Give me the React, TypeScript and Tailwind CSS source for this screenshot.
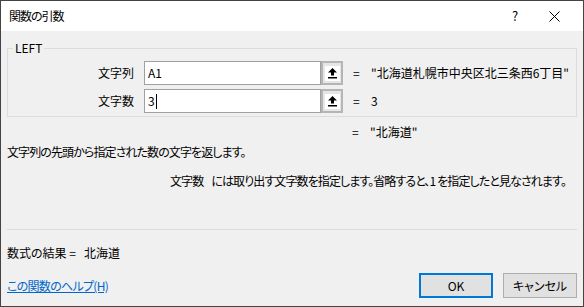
import React from "react";

const UploadIcon = () => (
  <svg width="11" height="12" viewBox="0 0 11 12" className="block">
    <path d="M5.5 1 L10 5.5 H7 V8.5 H4 V5.5 H1 Z" fill="#000" />
    <rect x="1" y="10" width="9" height="1.5" fill="#000" />
  </svg>
);

const ArgRow = ({ label, value, result, caret }: { label: string; value: string; result: string; caret?: boolean }) => (
  <div className="flex items-center h-[24px]">
    <div className="w-[136px] text-right pr-[10px]">{label}</div>
    <div className="flex h-[24px]">
      <div className="w-[177px] h-[24px] bg-white border border-[#a0a0a0] flex items-center pl-[3px]">
        {value}
        {caret && <span className="inline-block w-px h-[15px] bg-black ml-[1px]" />}
      </div>
      <div className="w-[22px] h-[24px] border-2 border-[#b5b5b5] bg-[#e6e6e6] flex items-center justify-center">
        <div className="w-[15px] h-[15px] bg-white flex items-center justify-center">
          <UploadIcon />
        </div>
      </div>
    </div>
    <div className="ml-[10px] w-[18px]">=</div>
    <div className="whitespace-nowrap">{result}</div>
  </div>
);

export default function App() {
  return (
    <div
      className="w-[584px] h-[307px] border border-[#444] bg-[#f0f0f0] text-[12px] leading-[16px] text-black flex flex-col overflow-hidden [font-feature-settings:'palt']"
      style={{ fontFamily: '"Noto Sans CJK JP", "Noto Sans", sans-serif' }}
    >
      <div className="h-[30px] bg-white flex items-center pl-[8px] shrink-0">
        <span className="flex-1 tracking-[-1px]">関数の引数</span>
        <span className="w-[20px] text-center text-[13px]">?</span>
        <span className="w-[58px] flex justify-center">
          <svg width="11" height="11" viewBox="0 0 11 11">
            <path d="M0.5 0.5 L10.5 10.5 M10.5 0.5 L0.5 10.5" stroke="#000" strokeWidth="1" />
          </svg>
        </span>
      </div>

      <div className="flex-1 flex flex-col pl-[6px] pr-[6px]">
        <fieldset className="mt-[9px] border border-[#dcdcdc] pl-[0px] pb-[3px] pt-[5px] min-w-0">
          <legend className="ml-[5px] px-[2px]">LEFT</legend>
          <div className="flex flex-col gap-[4px]">
            <ArgRow label="文字列" value="A1" result={'"北海道札幌市中央区北三条西6丁目"'} />
            <ArgRow label="文字数" value="3" result="3" caret />
          </div>
        </fieldset>

        <div className="flex mt-[7px] h-[16px]">
          <div className="w-[345px]" />
          <div className="w-[18px]">=</div>
          <div>"北海道"</div>
        </div>

        <div className="mt-[4px] whitespace-nowrap tracking-[-0.9px]">文字列の先頭から指定された数の文字を返します。</div>

        <div className="mt-[13px] flex pl-[163px] whitespace-nowrap tracking-[-0.9px]">
          <span className="mr-[8px]">文字数</span>
          <span>には取り出す文字数を指定します。省略すると、1 を指定したと見なされます。</span>
        </div>

        <div className="mt-[40px] border-t border-[#dcdcdc]" />

        <div className="mt-[15px] whitespace-nowrap">数式の結果 =&nbsp;&nbsp;&nbsp;北海道</div>

        <div className="flex items-start mt-[12px]">
          <a className="flex-1 mt-[5px] text-[#0066cc] underline whitespace-nowrap tracking-[-0.7px]">この関数のヘルプ(H)</a>
          <button className="w-[74px] h-[25px] border-2 border-[#0078d7] bg-[#e1e1e1] mr-[10px]">OK</button>
          <button className="w-[74px] h-[25px] border border-[#adadad] bg-[#e1e1e1]">キャンセル</button>
        </div>
      </div>
    </div>
  );
}
